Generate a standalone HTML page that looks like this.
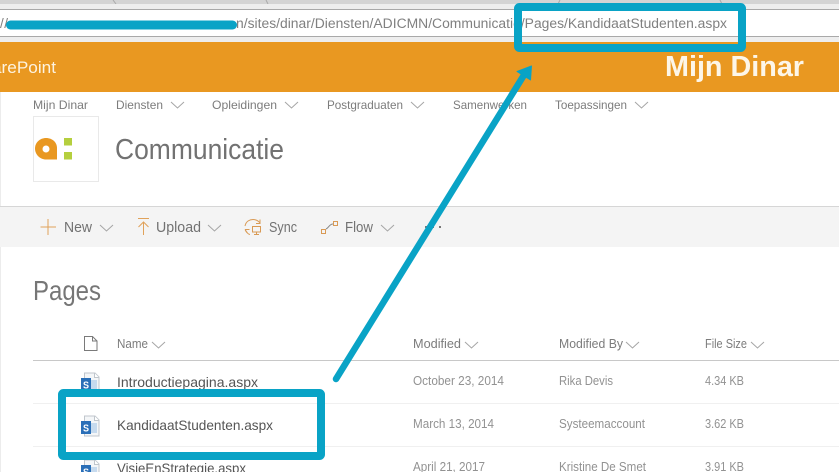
<!DOCTYPE html>
<html>
<head>
<meta charset="utf-8">
<style>
html,body{margin:0;padding:0;background:#fff;width:839px;height:472px;overflow:hidden}
svg{display:block;font-family:"Liberation Sans",sans-serif;filter:blur(0.3px)}
</style>
</head>
<body>
<svg width="839" height="472" viewBox="0 0 839 472" xmlns="http://www.w3.org/2000/svg">
<defs>
<g id="chev"><path d="M0 0L6.500 6L13 0" fill="none" stroke="#a5a5a5" stroke-width="1"/></g>
<g id="doc">
<path d="M4.500 1H15L19 5V21H4.500Z" fill="#f4f6f8" stroke="#c0c6cc" stroke-width="1"/>
<path d="M14.500 1V5.500H19" fill="#fff" stroke="#c0c6cc" stroke-width="1"/>
<rect x="11" y="8" width="6" height="10" fill="#c6daee"/>
<rect x="1" y="6" width="10" height="13" fill="#2a6fb8"/>
<text x="3" y="16.500" font-size="10" font-weight="bold" fill="#fff" textLength="6" lengthAdjust="spacingAndGlyphs">S</text>
</g>
</defs>

<!-- browser chrome -->
<rect x="0" y="0" width="839" height="4" fill="#d4d4d4"/>
<path d="M113 0L116 4M266 0L268 4M560 0L558 4M720 0L722 4" stroke="#aaa" stroke-width="1" fill="none"/>
<rect x="0" y="4" width="839" height="5" fill="#eeeeee"/>
<rect x="0" y="9" width="839" height="1" fill="#a9a9a9"/>
<rect x="0" y="36" width="839" height="1" fill="#a9a9a9"/>
<rect x="0" y="37" width="839" height="5" fill="#eeeeee"/>
<text x="0" y="28" font-size="13.500" fill="#808080" textLength="8">//</text>
<text x="236" y="28" font-size="13.500" fill="#808080" textLength="491" lengthAdjust="spacingAndGlyphs">n/sites/dinar/Diensten/ADICMN/Communicatie/Pages/KandidaatStudenten.aspx</text>

<!-- orange bar -->
<rect x="0" y="42" width="839" height="50" fill="#e99821"/>
<text x="-8" y="73" font-size="16.500" fill="#fdf3e0" textLength="64" lengthAdjust="spacingAndGlyphs">arePoint</text>
<text x="665" y="76" font-size="29" font-weight="bold" fill="#fdf6e8" textLength="139" lengthAdjust="spacingAndGlyphs">Mijn Dinar</text>

<!-- left edge -->
<rect x="0" y="92" width="1" height="380" fill="#ececec"/>

<!-- nav -->
<g font-size="12" fill="#7c7c7c">
<text x="33" y="109" textLength="55" lengthAdjust="spacingAndGlyphs">Mijn Dinar</text>
<text x="116" y="109" textLength="47" lengthAdjust="spacingAndGlyphs">Diensten</text>
<text x="212" y="109" textLength="65" lengthAdjust="spacingAndGlyphs">Opleidingen</text>
<text x="327" y="109" textLength="76" lengthAdjust="spacingAndGlyphs">Postgraduaten</text>
<text x="453" y="109" textLength="74" lengthAdjust="spacingAndGlyphs">Samenwerken</text>
<text x="555" y="109" textLength="72" lengthAdjust="spacingAndGlyphs">Toepassingen</text>
</g>
<use href="#chev" x="171" y="102"/>
<use href="#chev" x="285" y="102"/>
<use href="#chev" x="411" y="102"/>
<use href="#chev" x="635" y="102"/>

<!-- logo -->
<rect x="33.500" y="116.500" width="65" height="65" fill="#fff" stroke="#e9e9e9"/>
<path d="M46 138C52.500 138 57 142.500 57 148V159.500H46C40 159.500 35 154.500 35 148.500C35 142.500 40 138 46 138Z" fill="#e99821"/>
<circle cx="46" cy="149" r="3.500" fill="#fff"/>
<rect x="64" y="138" width="8" height="7.500" fill="#b5cf3e"/>
<rect x="64" y="152" width="8" height="7.500" fill="#b5cf3e"/>
<text x="115" y="159" font-size="29" fill="#727272" textLength="169" lengthAdjust="spacingAndGlyphs">Communicatie</text>

<!-- command bar -->
<rect x="0" y="207" width="839" height="40" fill="#f4f4f4"/>
<rect x="0" y="206" width="839" height="1" fill="#d6d6d6"/>
<path d="M48 219V235M40.500 227H56" stroke="#e0a25a" stroke-width="1" fill="none"/>
<text x="64" y="232" font-size="14.500" fill="#727272" textLength="28" lengthAdjust="spacingAndGlyphs">New</text>
<use href="#chev" x="100" y="225"/>
<path d="M138 218.500H149M143.500 235V222M138.500 227L143.500 222L148.500 227" stroke="#e0a25a" stroke-width="1" fill="none"/>
<text x="156" y="232" font-size="14.500" fill="#727272" textLength="45" lengthAdjust="spacingAndGlyphs">Upload</text>
<use href="#chev" x="208" y="225"/>
<path d="M245 226C246 221 250 219.500 253 219.500C256 219.500 258.500 221 260 223M260 219.500V223.500H256M245 229.500H249.500M245 229.500L247.500 233M245 229.500C246 232 248 234 250 234.500" stroke="#d99a55" stroke-width="1" fill="none"/>
<rect x="252.500" y="226.500" width="8" height="5.500" fill="none" stroke="#d99a55"/>
<path d="M254 234.500H259M256.500 232V234.500" stroke="#d99a55" fill="none"/>
<text x="269" y="232" font-size="14.500" fill="#727272" textLength="28" lengthAdjust="spacingAndGlyphs">Sync</text>
<rect x="321.500" y="229.500" width="4" height="4" fill="none" stroke="#d99a55"/>
<rect x="333.500" y="221.500" width="4" height="4" fill="none" stroke="#d99a55"/>
<path d="M326 229C329 228 329 224 333 224" stroke="#888" fill="none"/>
<text x="345" y="232" font-size="14.500" fill="#727272" textLength="28" lengthAdjust="spacingAndGlyphs">Flow</text>
<use href="#chev" x="381" y="225"/>
<g fill="#777"><rect x="425" y="226" width="2" height="2"/><rect x="432" y="226" width="2" height="2"/><rect x="439" y="226" width="2" height="2"/></g>

<!-- Pages -->
<text x="33" y="300" font-size="28" fill="#767676" textLength="68" lengthAdjust="spacingAndGlyphs">Pages</text>

<!-- table header -->
<path d="M84.500 336.500H92.500L97 341V350.500H84.500Z M92.500 336.500V341H97" fill="none" stroke="#7a7a7a" stroke-width="1"/>
<g font-size="12.500" fill="#7c7c7c">
<text x="117" y="348" textLength="31" lengthAdjust="spacingAndGlyphs">Name</text>
<text x="413" y="348" textLength="48" lengthAdjust="spacingAndGlyphs">Modified</text>
<text x="559" y="348" textLength="64" lengthAdjust="spacingAndGlyphs">Modified By</text>
<text x="705" y="348" textLength="42" lengthAdjust="spacingAndGlyphs">File Size</text>
</g>
<use href="#chev" x="152" y="342"/>
<use href="#chev" x="465" y="342"/>
<use href="#chev" x="626" y="342"/>
<use href="#chev" x="751" y="342"/>
<rect x="33" y="360" width="806" height="1" fill="#c8c8c8"/>
<rect x="33" y="403" width="806" height="1" fill="#f0f0f0"/>
<rect x="33" y="446" width="806" height="1" fill="#f0f0f0"/>

<!-- rows -->
<use href="#doc" x="80" y="372"/>
<use href="#doc" x="80" y="415"/>
<use href="#doc" x="80" y="459"/>
<g font-size="14" fill="#555">
<text x="117" y="387" textLength="141" lengthAdjust="spacingAndGlyphs">Introductiepagina.aspx</text>
<text x="117" y="430" textLength="156" lengthAdjust="spacingAndGlyphs">KandidaatStudenten.aspx</text>
<text x="117" y="473" textLength="129" lengthAdjust="spacingAndGlyphs">VisieEnStrategie.aspx</text>
</g>
<g font-size="12.500" fill="#929292">
<text x="413" y="385" textLength="91" lengthAdjust="spacingAndGlyphs">October 23, 2014</text>
<text x="413" y="428" textLength="81" lengthAdjust="spacingAndGlyphs">March 13, 2014</text>
<text x="413" y="471" textLength="72" lengthAdjust="spacingAndGlyphs">April 21, 2017</text>
<text x="559" y="385" textLength="54" lengthAdjust="spacingAndGlyphs">Rika Devis</text>
<text x="559" y="428" textLength="86" lengthAdjust="spacingAndGlyphs">Systeemaccount</text>
<text x="559" y="471" textLength="87" lengthAdjust="spacingAndGlyphs">Kristine De Smet</text>
<text x="705" y="385" textLength="39" lengthAdjust="spacingAndGlyphs">4.34 KB</text>
<text x="705" y="428" textLength="39" lengthAdjust="spacingAndGlyphs">3.62 KB</text>
<text x="705" y="471" textLength="39" lengthAdjust="spacingAndGlyphs">3.91 KB</text>
</g>

<!-- annotations -->
<path d="M10.500 25H232.500" stroke="#09a3c6" stroke-width="9" stroke-linecap="round"/>
<rect x="518" y="7" width="224" height="41" fill="none" stroke="#09a3c6" stroke-width="8" rx="1.500"/>
<rect x="62" y="393" width="259" height="63" fill="none" stroke="#09a3c6" stroke-width="8" rx="1.500"/>
<path d="M336 379L524 75" stroke="#09a3c6" stroke-width="6.500" stroke-linecap="round"/>
<path d="M531.500 66L517 71.500L530.500 80Z" fill="#09a3c6" stroke="#09a3c6" stroke-linejoin="round"/>
</svg>
</body>
</html>
